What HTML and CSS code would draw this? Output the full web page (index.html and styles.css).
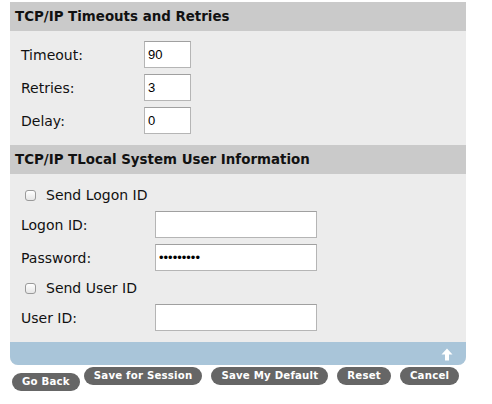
FILE: index.html
```html
<!DOCTYPE html>
<html>
<head>
<meta charset="utf-8">
<link rel="stylesheet" href="styles.css">
</head>
<body>
<div class="panel">
  <div class="section-head">TCP/IP Timeouts and Retries</div>
  <div class="section-body grid-short">
    <label class="lbl">Timeout:</label><input class="field short" type="text" value="90">
    <label class="lbl">Retries:</label><input class="field short" type="text" value="3">
    <label class="lbl">Delay:</label><input class="field short" type="text" value="0">
  </div>
  <div class="section-head">TCP/IP TLocal System User Information</div>
  <div class="section-body grid-long">
    <div class="check-row"><span class="check"></span><span>Send Logon ID</span></div>
    <label class="lbl">Logon ID:</label><input class="field long" type="text" value="">
    <label class="lbl">Password:</label><input class="field long" type="password" value="123456789">
    <div class="check-row"><span class="check"></span><span>Send User ID</span></div>
    <label class="lbl">User ID:</label><input class="field long" type="text" value="">
  </div>
  <div class="footer-bar">
    <svg class="up-arrow" width="12" height="13" viewBox="0 0 12 13"><path d="M6 0.5 L11.5 6.5 L8 6.5 L8 12.5 L4 12.5 L4 6.5 L0.5 6.5 Z" fill="#fff"/></svg>
  </div>
</div>
<div class="buttons">
  <span class="btn btn-low">Go Back</span>
  <span class="btn">Save for Session</span>
  <span class="btn gap">Save My Default</span>
  <span class="btn gap">Reset</span>
  <span class="btn gap">Cancel</span>
</div>
</body>
</html>
```
FILE: styles.css
```css
html, body {
  margin: 0;
  padding: 0;
  background: #ffffff;
}
body {
  padding: 2px 0 0 10px;
  font-family: "DejaVu Sans", Verdana, sans-serif;
  color: #111;
}
.panel {
  width: 456px;
  background: #ececec;
  border-radius: 0 0 8px 8px;
  overflow: hidden;
}
.section-head {
  height: 29px;
  background: #cacaca;
  font-weight: bold;
  font-size: 13.4px;
  line-height: 29px;
  padding-left: 5px;
  color: #111;
}
.section-body {
  display: grid;
  row-gap: 6px;
  align-items: center;
  padding: 10px 0 11px 11px;
}
.grid-short {
  grid-template-columns: 123px 47px;
}
.grid-long {
  grid-template-columns: 134px 162px;
}
.lbl {
  font-size: 14px;
  line-height: 20px;
}
.field {
  box-sizing: border-box;
  height: 27px;
  margin: 0;
  border: 1px solid #b5b5b5;
  border-top-color: #a0a0a0;
  background: #fff;
  font-family: "Liberation Sans", Arial, sans-serif;
  font-size: 13px;
  padding: 0 3px;
  color: #000;
  outline: none;
}
.short { width: 47px; }
.long { width: 162px; }
.check-row {
  grid-column: 1 / -1;
  height: 21px;
  display: flex;
  align-items: center;
  font-size: 14px;
  padding-left: 4px;
}
.check {
  box-sizing: border-box;
  width: 11px;
  height: 11px;
  border: 1px solid #9a9a9a;
  border-radius: 3px;
  background: linear-gradient(#ffffff, #e6e6e6);
  margin-right: 10px;
  margin-top: 2px;
}
.footer-bar {
  height: 23px;
  background: #a9c5d9;
  display: flex;
  justify-content: flex-end;
  align-items: flex-start;
  padding-right: 13px;
}
.up-arrow {
  margin-top: 6px;
}
.buttons {
  display: flex;
  align-items: flex-start;
  margin-top: 2px;
  margin-left: 2px;
}
.btn {
  box-sizing: border-box;
  height: 18px;
  line-height: 18px;
  padding: 0 10px;
  border-radius: 9px;
  background: #666666;
  color: #ffffff;
  font-weight: bold;
  font-size: 10.2px;
  letter-spacing: 0.2px;
  white-space: nowrap;
}
.btn-low {
  margin-top: 6px;
  margin-right: 4px;
}
.gap {
  margin-left: 9px;
}
```
